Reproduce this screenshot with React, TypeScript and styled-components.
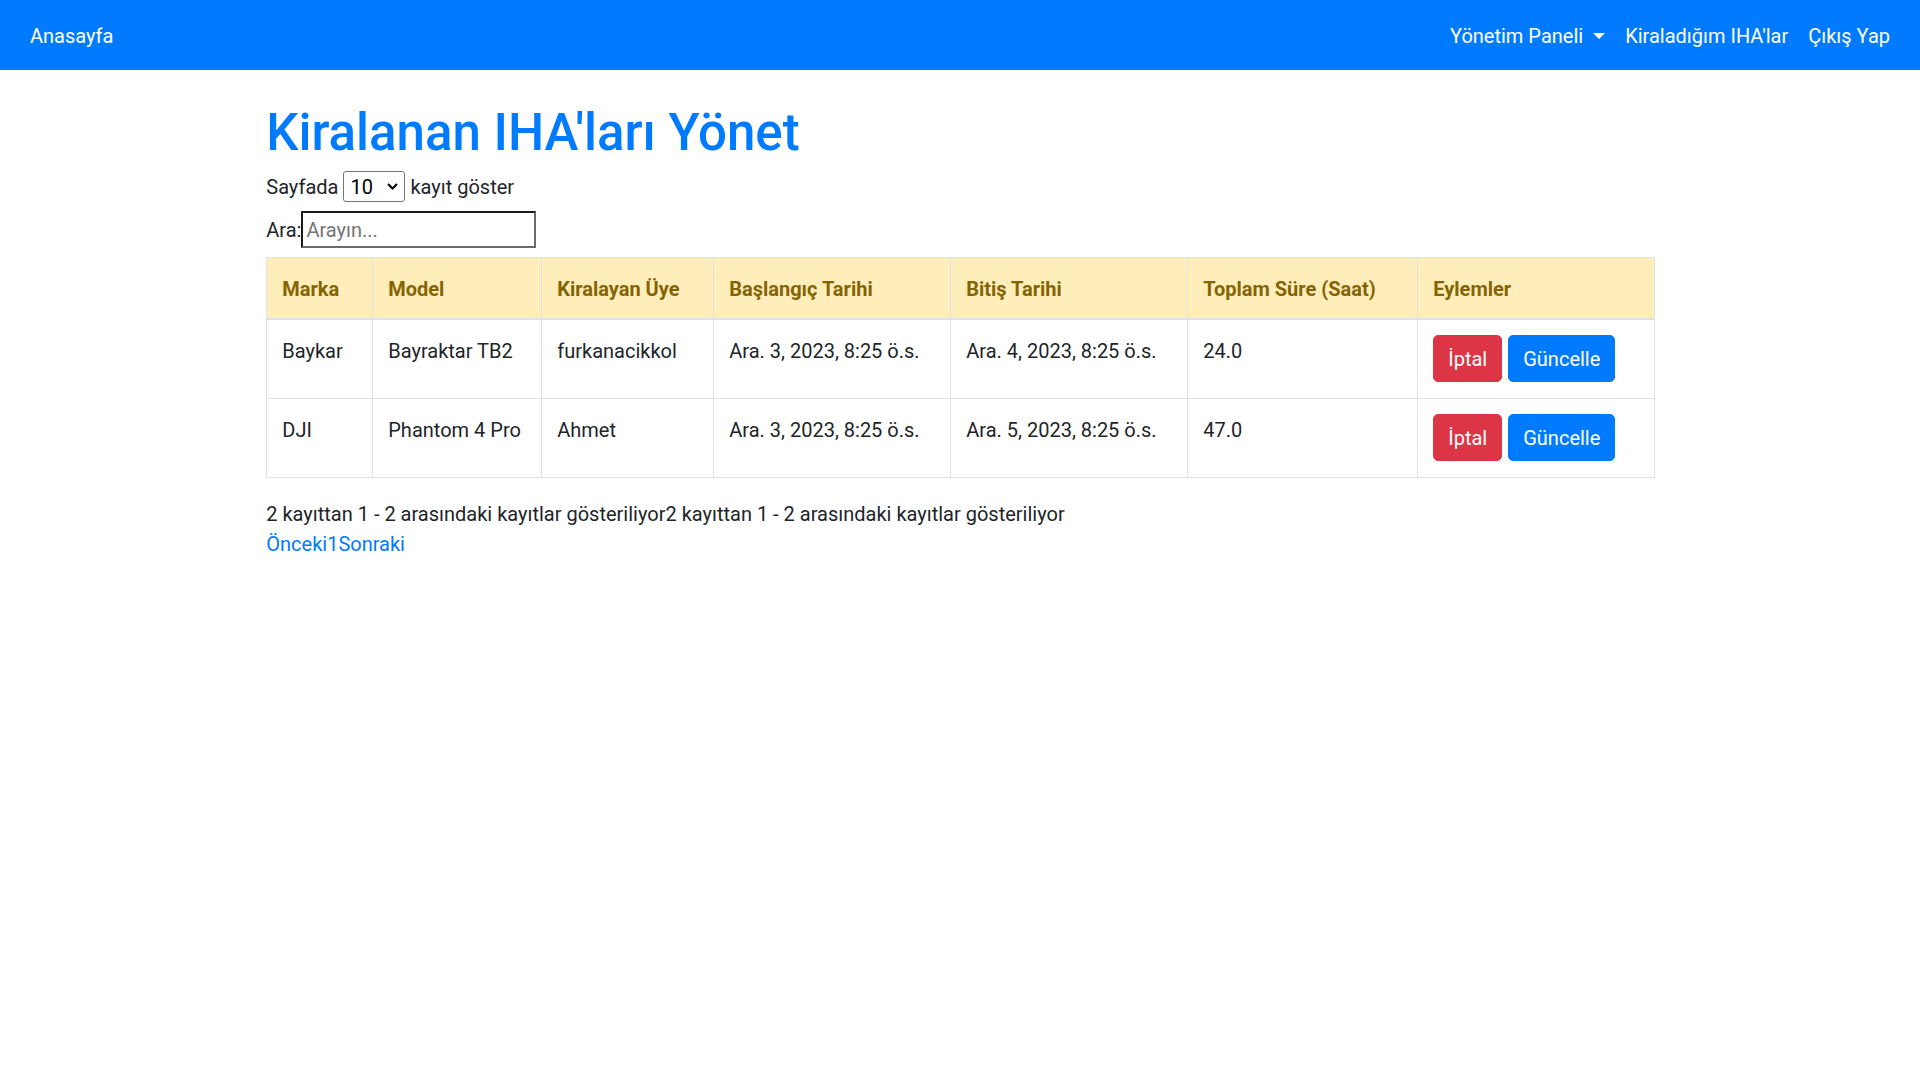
import React from "react";
import styled, { createGlobalStyle } from "styled-components";

const GlobalStyle = createGlobalStyle`
  * { box-sizing: border-box; }
  body {
    margin: 0;
    background: #fff;
    color: #212529;
    font-family: Roboto, "Noto Sans", sans-serif;
    font-size: 20px;
    line-height: 1.5;
  }
`;

const Navbar = styled.nav`
  display: flex;
  align-items: center;
  justify-content: space-between;
  height: 70px;
  padding: 10px 20px;
  background: #007bff;
`;

const NavGroup = styled.div`
  display: flex;
  align-items: center;
`;

const NavLink = styled.a`
  display: flex;
  align-items: center;
  padding: 11px 10px 9px;
  color: #fff;
  font-size: 20px;
  line-height: 30px;
  text-decoration: none;
  white-space: nowrap;
`;

const Caret = styled.span`
  display: inline-block;
  margin-left: 10px;
  width: 0;
  height: 0;
  border-top: 6px solid #fff;
  border-left: 6px solid transparent;
  border-right: 6px solid transparent;
`;

const Container = styled.main`
  max-width: 1425px;
  margin: 30px auto 0;
  padding: 0 18.75px;
`;

const Title = styled.h1`
  margin: 0 0 8px;
  padding-top: 2px;
  font-size: 51px;
  font-weight: 500;
  line-height: 1.2;
  color: #007bff;
`;

const LengthRow = styled.div`
  display: flex;
  align-items: center;
  gap: 5px;
  height: 31px;
`;

const SelectWrap = styled.span`
  position: relative;
  display: inline-flex;
`;

const Select = styled.select`
  appearance: none;
  width: 62px;
  height: 31px;
  padding: 0 0 0 6px;
  border: 1px solid #767676;
  border-radius: 3px;
  background: #fff;
  color: #000;
  font-family: Roboto, sans-serif;
  font-size: 20px;
`;

const Chevron = styled.svg`
  position: absolute;
  right: 7px;
  top: 12px;
  pointer-events: none;
`;

const SearchRow = styled.label`
  display: flex;
  align-items: center;
  margin-top: 9px;
`;

const SearchInput = styled.input`
  width: 235px;
  height: 37px;
  padding: 0 3px;
  border-style: solid;
  border-width: 2.5px;
  border-color: #1b1b1b #6c6c6c #6c6c6c #1b1b1b;
  font-family: Roboto, sans-serif;
  font-size: 20px;
  color: #212529;
  outline: none;
  &::placeholder { color: #757575; }
`;

const Table = styled.table`
  width: 100%;
  margin: 9px 0 20px;
  border-collapse: collapse;
  table-layout: fixed;
  border: 1px solid #dee2e6;
`;

const Col = styled.col<{ $w: number }>`
  width: ${(p) => p.$w}px;
`;

const Th = styled.th`
  padding: 16px 15px 14px;
  background: #ffeeba;
  color: #856404;
  font-weight: 700;
  text-align: left;
  vertical-align: bottom;
  line-height: 30px;
  border: 1px solid #dee2e6;
  border-bottom-width: 2.5px;
  white-space: nowrap;
`;

const Td = styled.td`
  padding: 15px 15px 16px;
  vertical-align: top;
  line-height: 30px;
  border: 1px solid #dee2e6;
  white-space: nowrap;
`;

const CellText = styled.div`
  padding-top: 1px;
`;

const Actions = styled.div`
  display: flex;
  gap: 6px;
`;

const Button = styled.button<{ $variant: "danger" | "primary" }>`
  padding: 7.5px 14px;
  border: 1.25px solid ${(p) => (p.$variant === "danger" ? "#dc3545" : "#007bff")};
  border-radius: 5px;
  background: ${(p) => (p.$variant === "danger" ? "#dc3545" : "#007bff")};
  color: #fff;
  font-family: Roboto, sans-serif;
  font-size: 20px;
  line-height: 30px;
  cursor: pointer;
`;

const Info = styled.div`
  padding-top: 1px;
  line-height: 30px;
`;

const Pager = styled.div`
  display: flex;
  line-height: 30px;
`;

const PageLink = styled.a`
  color: #007bff;
  text-decoration: none;
`;

const rows = [
  { marka: "Baykar", model: "Bayraktar TB2", uye: "furkanacikkol", bas: "Ara. 3, 2023, 8:25 ö.s.", bit: "Ara. 4, 2023, 8:25 ö.s.", sure: "24.0" },
  { marka: "DJI", model: "Phantom 4 Pro", uye: "Ahmet", bas: "Ara. 3, 2023, 8:25 ö.s.", bit: "Ara. 5, 2023, 8:25 ö.s.", sure: "47.0" },
];

const widths = [106, 169, 172, 237, 237, 230, 237];
const headers = ["Marka", "Model", "Kiralayan Üye", "Başlangıç Tarihi", "Bitiş Tarihi", "Toplam Süre (Saat)", "Eylemler"];

export default function App() {
  return (
    <>
      <GlobalStyle />
      <Navbar>
        <NavGroup>
          <NavLink href="#">Anasayfa</NavLink>
        </NavGroup>
        <NavGroup>
          <NavLink href="#">
            Yönetim Paneli
            <Caret />
          </NavLink>
          <NavLink href="#">Kiraladığım IHA'lar</NavLink>
          <NavLink href="#">Çıkış Yap</NavLink>
        </NavGroup>
      </Navbar>
      <Container>
        <Title>Kiralanan IHA'ları Yönet</Title>
        <LengthRow>
          <span>Sayfada</span>
          <SelectWrap>
            <Select defaultValue="10">
              <option value="10">10</option>
              <option value="25">25</option>
              <option value="50">50</option>
              <option value="100">100</option>
            </Select>
            <Chevron width="11" height="7" viewBox="0 0 11 7">
              <path d="M1 1l4.5 4.5L10 1" fill="none" stroke="#000" strokeWidth="2" />
            </Chevron>
          </SelectWrap>
          <span>kayıt göster</span>
        </LengthRow>
        <SearchRow>
          Ara:
          <SearchInput placeholder="Arayın..." />
        </SearchRow>
        <Table>
          <colgroup>
            {widths.map((w, i) => (
              <Col key={i} $w={w} />
            ))}
          </colgroup>
          <thead>
            <tr>
              {headers.map((h) => (
                <Th key={h}>{h}</Th>
              ))}
            </tr>
          </thead>
          <tbody>
            {rows.map((r) => (
              <tr key={r.marka}>
                <Td><CellText>{r.marka}</CellText></Td>
                <Td><CellText>{r.model}</CellText></Td>
                <Td><CellText>{r.uye}</CellText></Td>
                <Td><CellText>{r.bas}</CellText></Td>
                <Td><CellText>{r.bit}</CellText></Td>
                <Td><CellText>{r.sure}</CellText></Td>
                <Td>
                  <Actions>
                    <Button $variant="danger">İptal</Button>
                    <Button $variant="primary">Güncelle</Button>
                  </Actions>
                </Td>
              </tr>
            ))}
          </tbody>
        </Table>
        <Info>
          2 kayıttan 1 - 2 arasındaki kayıtlar gösteriliyor2 kayıttan 1 - 2 arasındaki kayıtlar gösteriliyor
        </Info>
        <Pager>
          <PageLink href="#">Önceki</PageLink>
          <PageLink href="#">1</PageLink>
          <PageLink href="#">Sonraki</PageLink>
        </Pager>
      </Container>
    </>
  );
}
